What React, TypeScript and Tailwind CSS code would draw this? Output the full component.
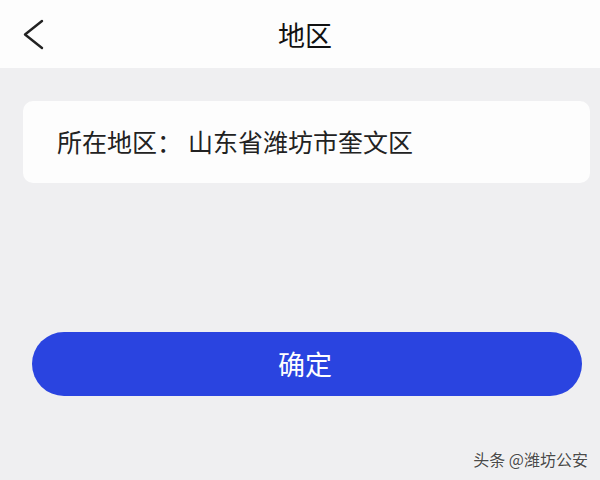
import React from 'react'

const font = { fontFamily: '"Noto Sans CJK SC", "Noto Sans", sans-serif' }

export default function App() {
  return (
    <div
      className="flex flex-col w-[600px] h-[480px] bg-[#efeff1] text-[#222] overflow-hidden"
      style={font}
    >
      {/* header */}
      <div className="grid grid-cols-[70px_1fr_70px] items-center h-[68px] bg-[#fdfdfd] shrink-0">
        <div className="pl-[22px] flex items-center">
          <svg width="24" height="32" viewBox="0 0 24 32" fill="none">
            <polyline
              points="20,3 3,16.5 20,30"
              stroke="#222"
              strokeWidth="2.4"
              strokeLinecap="round"
              strokeLinejoin="round"
            />
          </svg>
        </div>
        <h1 className="text-center text-[27px] font-normal text-[#111] leading-none pl-[10px]">地区</h1>
        <div />
      </div>

      {/* region card */}
      <div className="mt-[33px] ml-[23px] mr-[10px] h-[82px] bg-[#fdfdfd] rounded-[10px] flex items-center pl-[34px] pb-[2px] text-[25px] leading-none">
        <span>所在地区：</span>
        <span className="ml-[6px]">山东省潍坊市奎文区</span>
      </div>

      {/* confirm */}
      <button className="mt-[149px] ml-[32px] mr-[18px] h-[64px] rounded-full bg-[#2a44e0] text-white text-[27px] leading-none flex items-center justify-center shrink-0">
        <span className="pr-[4px] pb-[2px]">确定</span>
      </button>

      {/* watermark */}
      <div className="mt-auto mb-[13px] flex justify-end pr-[12px]">
        <span
          className="text-[16px] text-[#4a4a4a] leading-none"
          style={{ textShadow: '0 0 2px #fff, 0 0 1px #fff' }}
        >
          头条 @潍坊公安
        </span>
      </div>
    </div>
  )
}
